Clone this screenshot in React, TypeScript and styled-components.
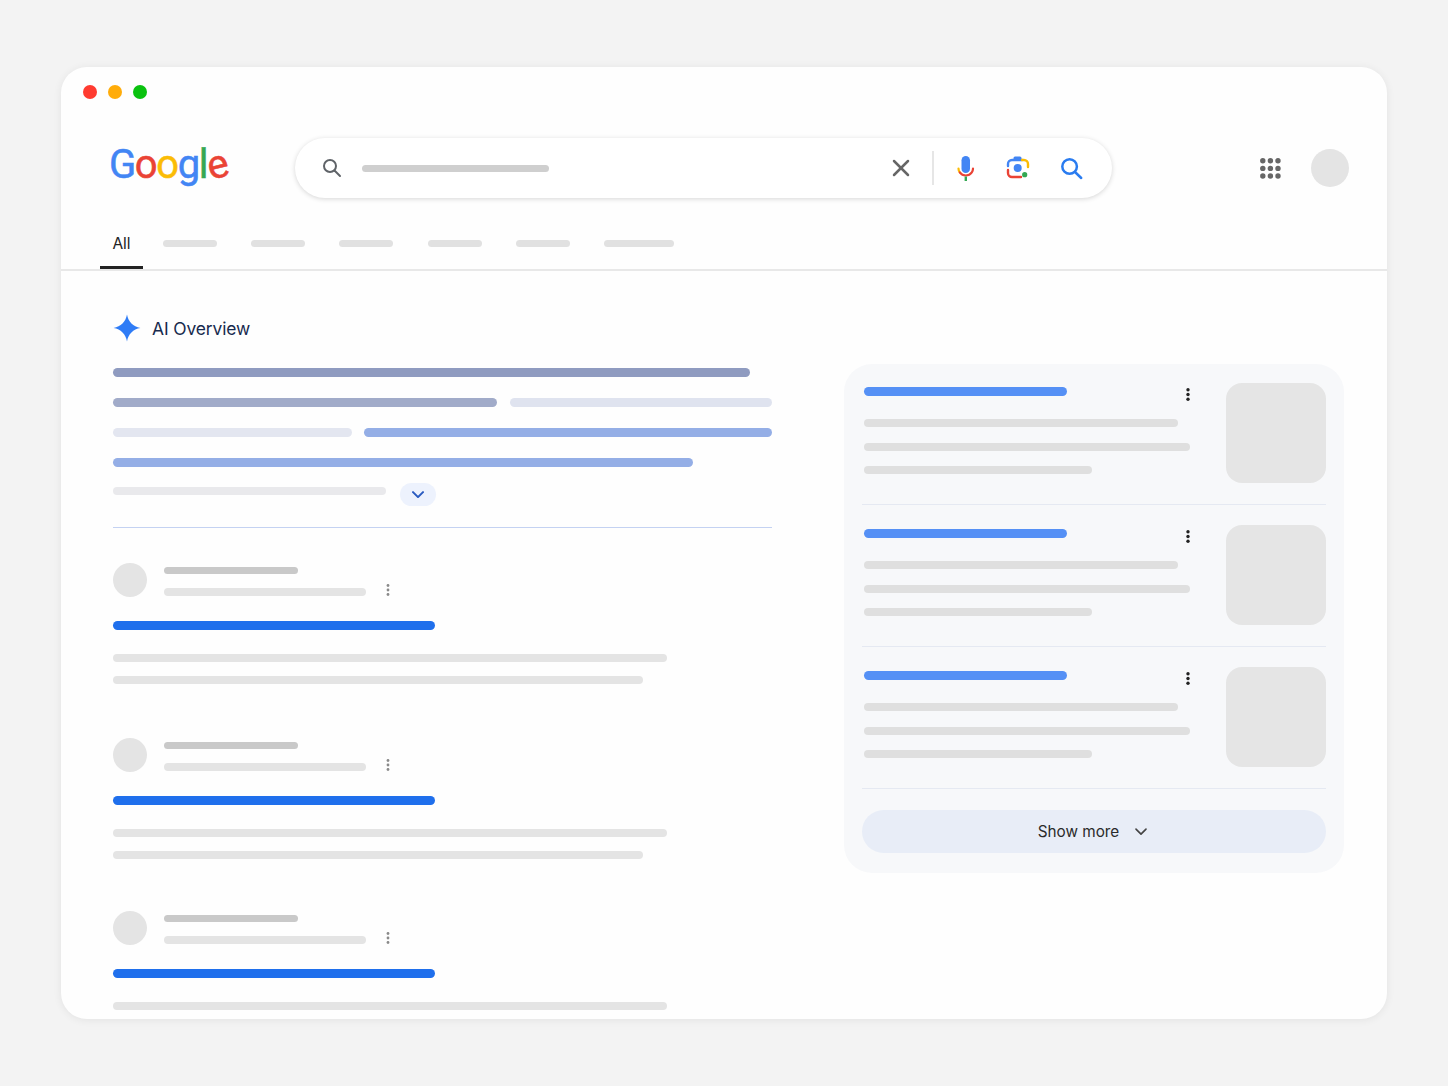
import React from "react";
import styled, { createGlobalStyle } from "styled-components";

const Global = createGlobalStyle`
  html, body { margin: 0; padding: 0; background: #f3f3f3; }
  body { font-family: "Inter", "Liberation Sans", sans-serif; }
  * { box-sizing: border-box; }
`;

const Page = styled.div`
  width: 1448px;
  height: 1086px;
  padding: 67px 0 0 61px;
  background: #f3f3f3;
  overflow: hidden;
`;

const Window = styled.div`
  width: 1326px;
  height: 952px;
  background: #fefefe;
  border-radius: 26px;
  box-shadow: 0 1px 8px rgba(0, 0, 0, 0.07);
  overflow: hidden;
`;

const TitleBar = styled.div`
  display: flex;
  gap: 11.3px;
  height: 71px;
  padding: 18px 0 0 21.6px;
`;

const Light = styled.span<{ $c: string }>`
  width: 14px;
  height: 14px;
  border-radius: 50%;
  background: ${(p) => p.$c};
`;

const Header = styled.header`
  display: flex;
  align-items: center;
  height: 60px;
  padding: 0 38px 0 48px;
`;

const Logo = styled.div`
  width: 186px;
  margin-top: -6px;
  font-family: "Roboto", "Liberation Sans", sans-serif;
  font-size: 40px;
  line-height: 50px;
  font-weight: 400;
  letter-spacing: -1.4px;
  -webkit-text-stroke: 0.5px currentColor;
`;

const LogoLetter = styled.span<{ $c: string; $tilt?: boolean }>`
  display: inline-block;
  color: ${(p) => p.$c};
  transform: rotate(${(p) => (p.$tilt ? -14 : 0)}deg);
`;

const SearchBox = styled.div`
  display: flex;
  align-items: center;
  width: 817px;
  height: 60px;
  padding: 0 29px 0 27px;
  background: #fff;
  border-radius: 30px;
  box-shadow: 0 1px 5px rgba(0, 0, 0, 0.16);
`;

const QueryBar = styled.div`
  width: 187px;
  height: 7px;
  margin-left: 20px;
  margin-right: auto;
  border-radius: 4px;
  background: #cfcfcf;
`;

const IconSlot = styled.span<{ $ml: number }>`
  display: flex;
  margin-left: ${(p) => p.$ml}px;
`;

const SearchDivider = styled.span`
  width: 2px;
  height: 34px;
  margin-left: 22px;
  background: #e6e6e6;
`;

const HeaderRight = styled.div`
  display: flex;
  align-items: center;
  gap: 30px;
  margin-left: auto;
`;

const Avatar = styled.div`
  width: 38px;
  height: 38px;
  border-radius: 50%;
  background: #e4e4e4;
`;

const TabBar = styled.nav`
  display: flex;
  align-items: flex-end;
  height: 73px;
  padding-left: 39px;
  border-bottom: 2px solid #e8e8e8;
`;

const Tab = styled.div<{ $active?: boolean }>`
  display: flex;
  align-items: center;
  justify-content: center;
  height: 49px;
  border-bottom: 3px solid ${(p) => (p.$active ? "#222" : "transparent")};
  ${(p) => (p.$active ? "width: 43px; margin-right: 20px;" : "margin-right: 34.2px;")}
  font-size: 15.5px;
  font-weight: 400;
  color: #222;
`;

const TabBarStub = styled.span<{ $w: number }>`
  display: block;
  width: ${(p) => p.$w}px;
  height: 7px;
  border-radius: 4px;
  background: #e1e1e1;
`;

const Main = styled.main`
  display: flex;
  align-items: flex-start;
  padding-left: 52px;
`;

const LeftColumn = styled.section`
  width: 659px;
  padding-top: 43px;
`;

const AiHeading = styled.div`
  display: flex;
  align-items: center;
  gap: 11px;
  height: 28px;
  margin-bottom: 26px;
  font-size: 17.4px;
  font-weight: 400;
  letter-spacing: -0.1px;
  color: #172a4e;
`;

const Bar = styled.div<{ $w: number | string; $h?: number; $c: string }>`
  flex: none;
  width: ${(p) => (typeof p.$w === "number" ? `${p.$w}px` : p.$w)};
  height: ${(p) => p.$h ?? 8}px;
  border-radius: 5px;
  background: ${(p) => p.$c};
`;

const SummaryLines = styled.div`
  display: flex;
  flex-direction: column;
  gap: 21px;
`;

const SummaryRow = styled.div`
  display: flex;
  justify-content: space-between;
`;

const MoreRow = styled.div`
  display: flex;
  align-items: flex-start;
  gap: 14px;
  margin-top: 16px;
`;

const MoreBar = styled(Bar)`
  margin-top: 4px;
`;

const MoreChip = styled.div`
  display: flex;
  align-items: center;
  justify-content: center;
  width: 36px;
  height: 23px;
  border-radius: 12px;
  background: #edf2fd;
`;

const SummaryDivider = styled.div`
  height: 1px;
  margin: 21px 0 35px;
  background: #c4d2f2;
`;

const Result = styled.article<{ $mt: number }>`
  margin-top: ${(p) => p.$mt}px;
`;

const ResultHead = styled.div`
  display: flex;
  gap: 17px;
  height: 34px;
`;

const Favicon = styled.div`
  width: 34px;
  height: 34px;
  border-radius: 50%;
  background: #e4e4e4;
`;

const ResultMeta = styled.div`
  display: flex;
  flex-direction: column;
  gap: 13px;
  padding-top: 4px;
`;

const SourceRow = styled.div`
  display: flex;
  align-items: center;
  gap: 20px;
`;

const ResultDots = styled.svg`
  display: block;
  margin-top: -3px;
`;

const ResultLink = styled(Bar)`
  margin-top: 24px;
`;

const ResultBody = styled.div`
  display: flex;
  flex-direction: column;
  gap: 14px;
  margin-top: 24px;
`;

const Panel = styled.aside`
  display: flex;
  flex-direction: column;
  gap: 20px;
  width: 500px;
  margin: 93px 0 0 72px;
  padding: 19px 18px 20px;
  border-radius: 28px;
  background: #f7f8fa;
`;

const Card = styled.div`
  display: flex;
  justify-content: space-between;
  padding: 0 0 21px 2px;
  border-bottom: 1px solid #e5e9f2;
`;

const CardText = styled.div`
  width: 326px;
  padding-top: 4px;
`;

const CardTitleRow = styled.div`
  display: flex;
  justify-content: space-between;
  height: 13px;
  margin-bottom: 19px;
`;

const CardDots = styled.svg`
  display: block;
  margin-top: 1px;
`;

const CardLines = styled.div`
  display: flex;
  flex-direction: column;
  gap: 15.5px;
`;

const Thumb = styled.div`
  width: 100px;
  height: 100px;
  border-radius: 16px;
  background: #e5e5e5;
`;

const ShowMore = styled.button`
  display: flex;
  align-items: center;
  justify-content: center;
  gap: 16px;
  height: 43px;
  margin-top: 1px;
  padding: 0 3px 0 0;
  border: 0;
  border-radius: 22px;
  background: #e8edf7;
  font-family: "Inter", "Liberation Sans", sans-serif;
  font-size: 15.3px;
  color: #2b2b2b;
`;

const SearchGlyph = () => (
  <svg width="20" height="20" viewBox="0 0 20 20" fill="none" stroke="#5f6368" strokeWidth="2" strokeLinecap="round">
    <circle cx="8" cy="8" r="6" />
    <line x1="12.5" y1="12.5" x2="18" y2="18" />
  </svg>
);

const ClearGlyph = () => (
  <svg width="18" height="18" viewBox="0 0 18 18" fill="none" stroke="#666" strokeWidth="2.5" strokeLinecap="round">
    <line x1="2" y1="2" x2="16" y2="16" />
    <line x1="16" y1="2" x2="2" y2="16" />
  </svg>
);

const MicGlyph = () => (
  <svg width="22" height="26" viewBox="0 0 22 26" fill="none">
    <rect x="6.5" y="1" width="8.5" height="17" rx="4.25" fill="#4285f4" />
    <path d="M3.5 13.5c0 1.4.4 2.8 1.3 3.9" stroke="#fbbc05" strokeWidth="2.2" strokeLinecap="round" />
    <path d="M4.8 17.4c1.4 2 3.6 3.1 6 3.1s4.6-1.1 6-3.1c.8-1.1 1.2-2.5 1.2-3.9" stroke="#ea4335" strokeWidth="2.2" strokeLinecap="round" />
    <path d="M10.8 21.5V26" stroke="#34a853" strokeWidth="2.4" />
  </svg>
);

const LensGlyph = () => (
  <svg width="24" height="24" viewBox="0 0 24 24" fill="none" strokeWidth="2.4" strokeLinecap="round">
    <rect x="7.5" y="0.5" width="8" height="4" rx="1.5" fill="#4285f4" />
    <path d="M2 10V8a4 4 0 0 1 4-4h10" stroke="#4285f4" />
    <path d="M16 4h2a4 4 0 0 1 4 4v3" stroke="#fbbc05" />
    <path d="M2 14v3a4 4 0 0 0 4 4h9" stroke="#ea4335" />
    <circle cx="18.7" cy="18.7" r="2.6" fill="#34a853" />
    <circle cx="11.7" cy="12" r="4" fill="#4285f4" />
  </svg>
);

const BlueSearchGlyph = () => (
  <svg width="22" height="24" viewBox="0 0 22 24" fill="none" stroke="#2a7cf0" strokeWidth="2.5" strokeLinecap="round">
    <circle cx="8.6" cy="10.5" r="7.3" />
    <line x1="14" y1="16" x2="20.2" y2="22" />
  </svg>
);

const AppsGlyph = () => (
  <svg width="21" height="21" viewBox="0 0 21 21" fill="#666">
    {[2.8, 10.4, 18].flatMap((y) => [2.8, 10.4, 18].map((x) => <circle key={`${x}-${y}`} cx={x} cy={y} r="2.7" />))}
  </svg>
);

const Sparkle = () => (
  <svg width="28" height="28" viewBox="0 0 28 28">
    <path d="M14 .6C15.2 7.8 20.2 12.8 27.4 14 20.2 15.2 15.2 20.2 14 27.4 12.8 20.2 7.8 15.2.6 14 7.8 12.8 12.8 7.8 14 .6Z" fill="#2f7cf6" />
  </svg>
);

const Chevron = ({ c, w = 12, sw = 2 }: { c: string; w?: number; sw?: number }) => (
  <svg width={w} height={w * 0.6} viewBox="0 0 12 7" fill="none" stroke={c} strokeWidth={sw} strokeLinecap="round" strokeLinejoin="round">
    <path d="M1 1l5 5 5-5" />
  </svg>
);

const TAB_WIDTHS = [54, 54, 54, 54, 54, 70];
const LOGO: [string, string][] = [
  ["G", "#4285f4"],
  ["o", "#ea4335"],
  ["o", "#fbbc05"],
  ["g", "#4285f4"],
  ["l", "#34a853"],
  ["e", "#ea4335"],
];

const SearchResult = ({ mt }: { mt: number }) => (
  <Result $mt={mt}>
    <ResultHead>
      <Favicon />
      <ResultMeta>
        <Bar $w={134} $h={7} $c="#c9c9c9" />
        <SourceRow>
          <Bar $w={202} $c="#e4e4e4" />
          <ResultDots width="4" height="12" viewBox="0 0 4 12" fill="#8a8a8a">
            <circle cx="2" cy="1.5" r="1.4" />
            <circle cx="2" cy="6" r="1.4" />
            <circle cx="2" cy="10.5" r="1.4" />
          </ResultDots>
        </SourceRow>
      </ResultMeta>
    </ResultHead>
    <ResultLink $w={322} $h={9} $c="#1f6fec" />
    <ResultBody>
      <Bar $w={554} $c="#e4e4e4" />
      <Bar $w={530} $c="#e4e4e4" />
    </ResultBody>
  </Result>
);

const SideCard = () => (
  <Card>
    <CardText>
      <CardTitleRow>
        <Bar $w={203} $h={8.5} $c="#5590f5" />
        <CardDots width="4" height="13" viewBox="0 0 4 13" fill="#222">
          <circle cx="2" cy="1.7" r="1.7" />
          <circle cx="2" cy="6.5" r="1.7" />
          <circle cx="2" cy="11.3" r="1.7" />
        </CardDots>
      </CardTitleRow>
      <CardLines>
        <Bar $w={314} $c="#dfdfdf" />
        <Bar $w={326} $c="#dfdfdf" />
        <Bar $w={228} $c="#dfdfdf" />
      </CardLines>
    </CardText>
    <Thumb />
  </Card>
);

export default function App() {
  return (
    <Page>
      <Global />
      <Window>
        <TitleBar>
          <Light $c="#ff3b30" />
          <Light $c="#ffac0a" />
          <Light $c="#0ac20f" />
        </TitleBar>
        <Header>
          <Logo>
            {LOGO.map(([ch, c], i) => (
              <LogoLetter key={i} $c={c} $tilt={ch === "e"}>
                {ch}
              </LogoLetter>
            ))}
          </Logo>
          <SearchBox>
            <SearchGlyph />
            <QueryBar />
            <ClearGlyph />
            <SearchDivider />
            <IconSlot $ml={21}>
              <MicGlyph />
            </IconSlot>
            <IconSlot $ml={29}>
              <LensGlyph />
            </IconSlot>
            <IconSlot $ml={31}>
              <BlueSearchGlyph />
            </IconSlot>
          </SearchBox>
          <HeaderRight>
            <AppsGlyph />
            <Avatar />
          </HeaderRight>
        </Header>
        <TabBar>
          <Tab $active>All</Tab>
          {TAB_WIDTHS.map((w, i) => (
            <Tab key={i}>
              <TabBarStub $w={w} />
            </Tab>
          ))}
        </TabBar>
        <Main>
          <LeftColumn>
            <AiHeading>
              <Sparkle />
              AI Overview
            </AiHeading>
            <SummaryLines>
              <Bar $w={637} $h={9} $c="#8f9bc0" />
              <SummaryRow>
                <Bar $w={384} $h={9} $c="#a1abc9" />
                <Bar $w={262} $h={9} $c="#dfe3ef" />
              </SummaryRow>
              <SummaryRow>
                <Bar $w={239} $h={9} $c="#e3e6f0" />
                <Bar $w={408} $h={9} $c="#94aee6" />
              </SummaryRow>
              <Bar $w={580} $h={9} $c="#94aee6" />
            </SummaryLines>
            <MoreRow>
              <MoreBar $w={273} $c="#e9e9ec" />
              <MoreChip>
                <Chevron c="#2a5bc0" />
              </MoreChip>
            </MoreRow>
            <SummaryDivider />
            <SearchResult mt={0} />
            <SearchResult mt={54} />
            <SearchResult mt={52} />
          </LeftColumn>
          <Panel>
            <SideCard />
            <SideCard />
            <SideCard />
            <ShowMore>
              Show more
              <Chevron c="#444" sw={1.6} />
            </ShowMore>
          </Panel>
        </Main>
      </Window>
    </Page>
  );
}
